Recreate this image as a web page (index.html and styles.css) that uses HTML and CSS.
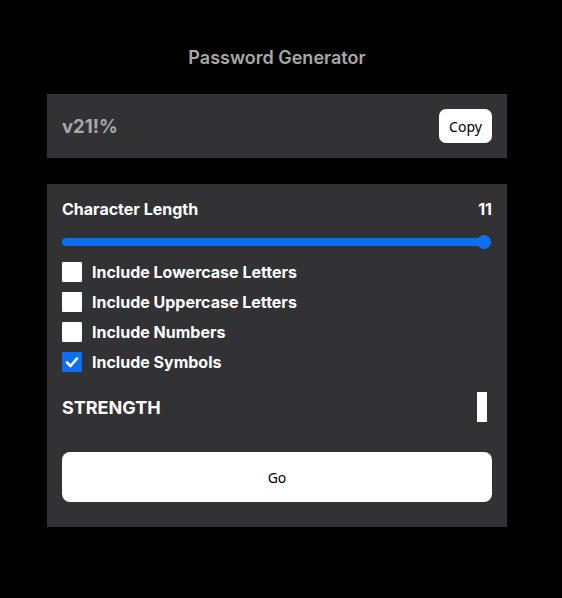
FILE: index.html
```html
<!DOCTYPE html>
<html>
<head>
<meta charset="utf-8">
<link rel="stylesheet" href="styles.css">
</head>
<body>
<main class="app">
  <h1 class="title">Password Generator</h1>
  <div class="output">
    <span class="password">v21!%</span>
    <button class="copy-btn">Copy</button>
  </div>
  <section class="settings">
    <div class="length-row">
      <span>Character Length</span>
      <span>11</span>
    </div>
    <div class="slider">
      <div class="track"></div>
      <div class="thumb"></div>
    </div>
    <ul class="options">
      <li class="option"><span class="box"></span>Include Lowercase Letters</li>
      <li class="option"><span class="box"></span>Include Uppercase Letters</li>
      <li class="option"><span class="box"></span>Include Numbers</li>
      <li class="option"><span class="box checked"><svg viewBox="0 0 20 20" width="20" height="20"><path d="M5 10.5 L8.5 14 L15 6.5" fill="none" stroke="#fff" stroke-width="2.6" stroke-linecap="round" stroke-linejoin="round"/></svg></span>Include Symbols</li>
    </ul>
    <div class="strength-row">
      <span class="strength-label">STRENGTH</span>
      <span class="strength-bar"></span>
    </div>
    <button class="go-btn">Go</button>
  </section>
</main>
</body>
</html>
```
FILE: styles.css
```css
html, body {
  margin: 0;
  padding: 0;
  background: #000;
}
body {
  font-family: Inter, "Noto Sans", sans-serif;
}
.app {
  width: 460px;
  margin-left: 47px;
  padding-top: 47px;
}
.title {
  margin: 0 0 25px;
  height: 22px;
  line-height: 22px;
  text-align: center;
  font-size: 18px;
  font-weight: 600;
  color: #a8a8a8;
}
.output {
  height: 64px;
  background: #323234;
  display: flex;
  align-items: center;
  justify-content: space-between;
  padding: 0 15px;
  box-sizing: border-box;
}
.password {
  font-size: 18.5px;
  font-weight: 700;
  color: #a8a8a8;
}
.copy-btn {
  width: 53px;
  height: 34px;
  border: none;
  border-radius: 7px;
  background: #fff;
  color: #000;
  font-family: "Noto Sans", Inter, sans-serif;
  font-size: 14px;
  padding: 0;
}
.settings {
  margin-top: 26px;
  background: #323234;
  padding: 16px 15px 25px;
  display: flex;
  flex-direction: column;
}
.length-row {
  display: flex;
  justify-content: space-between;
  height: 19px;
  line-height: 19px;
  font-size: 16px;
  font-weight: 700;
  color: #fff;
}
.slider {
  position: relative;
  height: 14px;
  margin-top: 16px;
}
.track {
  position: absolute;
  left: 0;
  right: 2px;
  top: 3px;
  height: 8px;
  border-radius: 4px;
  background: #0a6ff2;
}
.thumb {
  position: absolute;
  right: 1px;
  top: 0;
  width: 14px;
  height: 14px;
  border-radius: 50%;
  background: #0a6ff2;
}
.options {
  list-style: none;
  margin: 8px 0 0;
  padding: 0;
}
.option {
  height: 30px;
  display: flex;
  align-items: center;
  gap: 10px;
  font-size: 16px;
  font-weight: 700;
  color: #fff;
}
.box {
  width: 20px;
  height: 20px;
  background: #fff;
  border-radius: 1px;
  display: flex;
}
.box.checked {
  background: #0a6ff2;
}
.strength-row {
  margin-top: 15px;
  height: 30px;
  display: flex;
  align-items: center;
  justify-content: space-between;
}
.strength-label {
  font-size: 18px;
  font-weight: 700;
  color: #fff;
}
.strength-bar {
  width: 10px;
  height: 30px;
  background: #fff;
  margin-right: 5px;
}
.go-btn {
  margin-top: 30px;
  height: 50px;
  border: none;
  border-radius: 8px;
  background: #fff;
  color: #000;
  font-family: "Noto Sans", Inter, sans-serif;
  font-size: 14px;
}
```
